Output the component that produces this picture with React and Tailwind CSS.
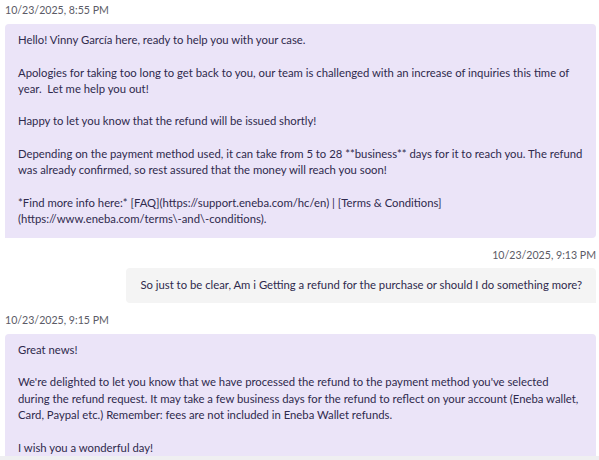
const agentOne = [
  'Hello! Vinny García here, ready to help you with your case.',
  '',
  'Apologies for taking too long to get back to you, our team is challenged with an increase of inquiries this time of',
  'year.  Let me help you out!',
  '',
  'Happy to let you know that the refund will be issued shortly!',
  '',
  'Depending on the payment method used, it can take from 5 to 28 **business** days for it to reach you. The refund',
  'was already confirmed, so rest assured that the money will reach you soon!',
  '',
  '*Find more info here:* [FAQ](https://support.eneba.com/hc/en) | [Terms & Conditions]',
  '(https://www.eneba.com/terms\\-and\\-conditions).',
]

const agentTwo = [
  'Great news!',
  '',
  "We're delighted to let you know that we have processed the refund to the payment method you've selected",
  'during the refund request. It may take a few business days for the refund to reflect on your account (Eneba wallet,',
  'Card, Paypal etc.) Remember: fees are not included in Eneba Wallet refunds.',
  '',
  'I wish you a wonderful day!',
]

function Lines({ lines }) {
  return lines.map((l, i) => (
    <div key={i} className="whitespace-pre h-[16.3px] leading-[16.3px]">
      {l || '\u00a0'}
    </div>
  ))
}

function Stamp({ children, right }) {
  return (
    <div className={`text-[10.6px] leading-[14px] text-[#5b5b66] ${right ? 'text-right' : ''}`}>
      {children}
    </div>
  )
}

export default function App() {
  return (
    <div className="w-[599px] h-[460px] bg-white overflow-hidden flex flex-col" style={{ fontFamily: 'Lato, "Open Sans", sans-serif' }}>
      <div className="flex-1 overflow-hidden pl-[5px] pr-[3px] pt-[3px] flex flex-col">
        <Stamp>10/23/2025, 8:55 PM</Stamp>
        <div className="mt-[7px] bg-[#ebe4f8] rounded-[4px] rounded-bl-none px-[13px] pt-[8px] pb-[10px] text-[11.3px] text-[#2f2a4d]">
          <Lines lines={agentOne} />
        </div>

        <div className="mt-[10px]">
          <Stamp right>10/23/2025, 9:13 PM</Stamp>
        </div>
        <div className="mt-[6px] self-end bg-[#f4f4f4] rounded-[4px] rounded-br-none px-[14px] pt-[9px] pb-[10px] text-[11.3px] text-[#2f2a4d]">
          <Lines lines={['So just to be clear, Am i Getting a refund for the purchase or should I do something more?']} />
        </div>

        <div className="mt-[10px]">
          <Stamp>10/23/2025, 9:15 PM</Stamp>
        </div>
        <div className="mt-[7px] bg-[#ebe4f8] rounded-[4px] rounded-bl-none px-[13px] pt-[8px] pb-[10px] text-[11.3px] text-[#2f2a4d]">
          <Lines lines={agentTwo} />
        </div>
      </div>
      <div className="h-[4px] bg-[#efeff1] shrink-0" />
    </div>
  )
}
